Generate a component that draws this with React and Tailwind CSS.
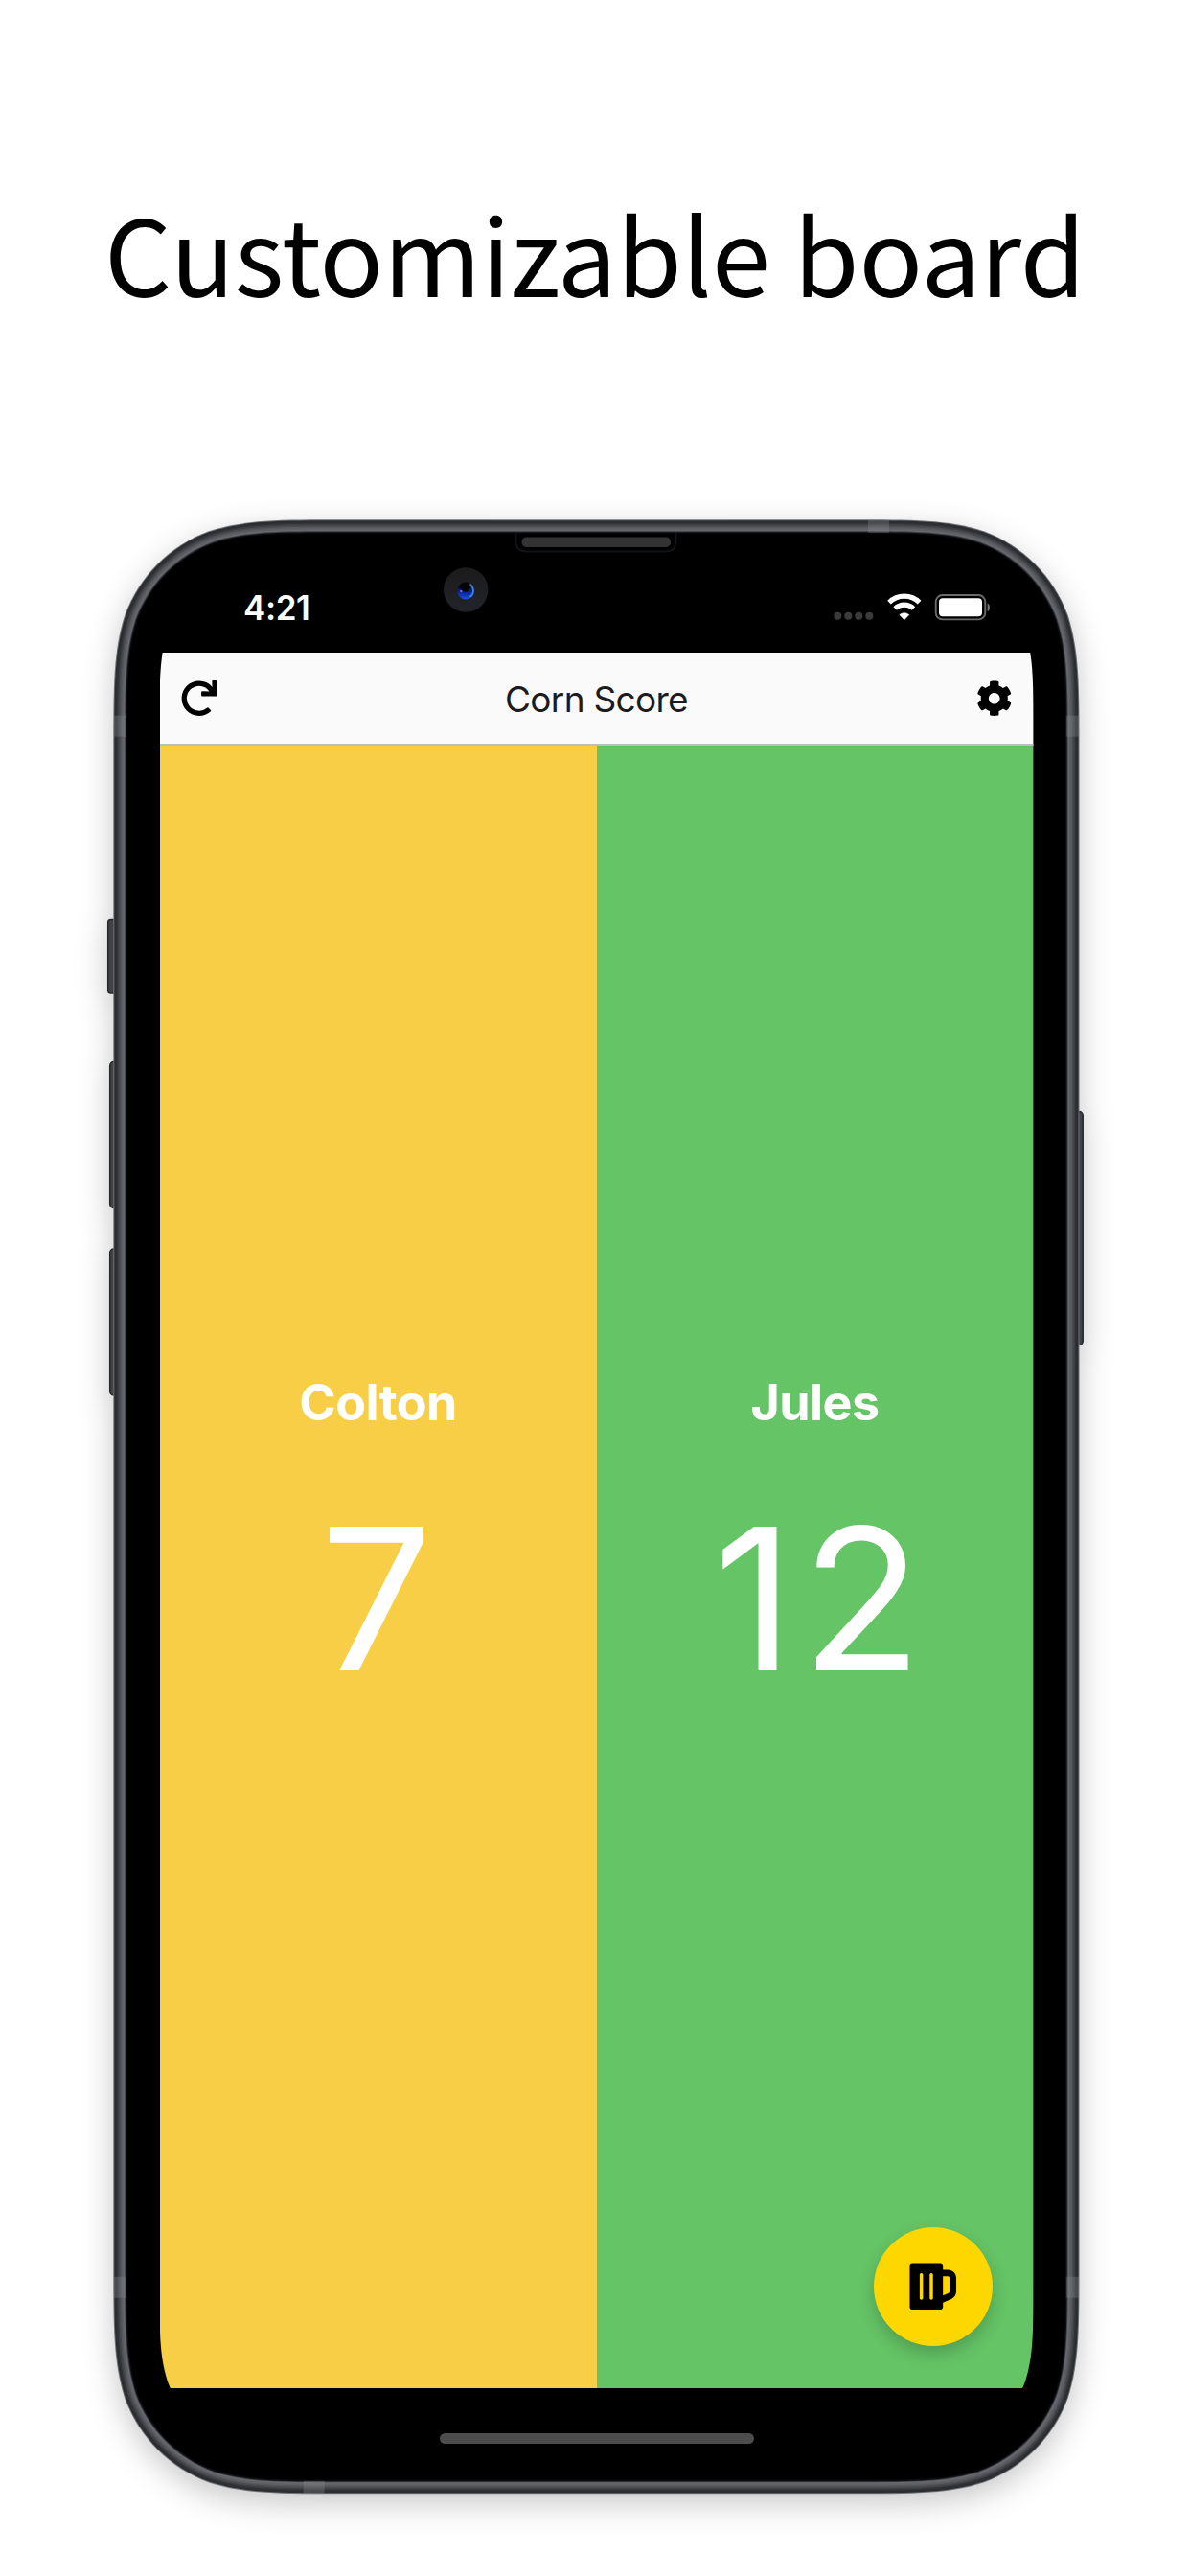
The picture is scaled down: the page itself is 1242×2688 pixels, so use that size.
import { FaRedo, FaCog, FaBeer } from "react-icons/fa";

// Rounded rectangle with continuous (smoothed) corners.
function smoothRect(x, y, w, h, r) {
  const a = 1.528665 * r;
  const b = 1.08849 * r;
  const c = 0.868407 * r;
  const d = 0.631494 * r;
  const e = 0.074911 * r;
  const f = 0.372824 * r;
  const g = 0.16906 * r;
  const R = x + w;
  const B = y + h;
  return [
    `M${x + a} ${y}`,
    `L${R - a} ${y}`,
    `C${R - b} ${y} ${R - c} ${y} ${R - d} ${y + e}`,
    `C${R - f} ${y + g} ${R - g} ${y + f} ${R - e} ${y + d}`,
    `C${R} ${y + c} ${R} ${y + b} ${R} ${y + a}`,
    `L${R} ${B - a}`,
    `C${R} ${B - b} ${R} ${B - c} ${R - e} ${B - d}`,
    `C${R - g} ${B - f} ${R - f} ${B - g} ${R - d} ${B - e}`,
    `C${R - c} ${B} ${R - b} ${B} ${R - a} ${B}`,
    `L${x + a} ${B}`,
    `C${x + b} ${B} ${x + c} ${B} ${x + d} ${B - e}`,
    `C${x + f} ${B - g} ${x + g} ${B - f} ${x + e} ${B - d}`,
    `C${x} ${B - c} ${x} ${B - b} ${x} ${B - a}`,
    `L${x} ${y + a}`,
    `C${x} ${y + b} ${x} ${y + c} ${x + e} ${y + d}`,
    `C${x + g} ${y + f} ${x + f} ${y + g} ${x + d} ${y + e}`,
    `C${x + c} ${y} ${x + b} ${y} ${x + a} ${y}Z`,
  ].join(" ");
}

// Metal rim, one ring per entry: [inset, colour].
const rim = [
  [0, "#6f7377"],
  [1, "#2b2d31"],
  [3, "#303236"],
  [4.5, "#3d3f43"],
  [6, "#4b4c51"],
  [7.5, "#57585d"],
  [9, "#606166"],
  [10.5, "#67686d"],
  [12, "#3a3c41"],
  [13, "#0b0d12"],
  [14.5, "#000000"],
];

function Chassis() {
  return (
    <svg className="absolute inset-0 overflow-visible" width="1009" height="2061" viewBox="0 0 1009 2061" aria-hidden="true">
      <g fill="#3f4246" stroke="#25272b" strokeWidth="1.5">
        <rect x="-5.3" y="417.5" width="14" height="76.5" rx="3" />
        <rect x="-3.3" y="565.5" width="14" height="153" rx="4" />
        <rect x="-3.3" y="761" width="14" height="153" rx="4" />
        <rect x="999" y="617.5" width="13.2" height="244" rx="4" />
      </g>
      {rim.map(([inset, color]) => (
        <path key={inset} d={smoothRect(0.3 + inset, 0.3 + inset, 1008.2 - inset * 2, 2060 - inset * 2, 158 - inset)} fill={color} />
      ))}
      <g fill="#8b8d92" fillOpacity="0.3">
        <rect x="0.5" y="204.7" width="13.5" height="22" />
        <rect x="994.8" y="204.7" width="13.5" height="22" />
        <rect x="0.5" y="1833.8" width="13.5" height="22" />
        <rect x="994.8" y="1833.8" width="13.5" height="22" />
        <rect x="788" y="0.5" width="22" height="13.5" />
        <rect x="198.7" y="2046.8" width="22" height="13.5" />
      </g>
      <path d="M420.3 14V22Q420.3 33.5 431.8 33.5H576Q587.5 33.5 587.5 22V14" fill="none" stroke="#10131a" strokeWidth="2" />
      <rect x="426.5" y="18.5" width="155.5" height="10.5" rx="5" fill="#333334" />
    </svg>
  );
}

function Camera() {
  return (
    <svg className="absolute left-[344px] top-[50px]" width="48" height="48" viewBox="0 0 48 48" aria-hidden="true">
      <defs>
        <linearGradient id="ring" x1="0" y1="0" x2="0" y2="1">
          <stop offset="0" stopColor="#1b1b1b" />
          <stop offset="1" stopColor="#23242b" />
        </linearGradient>
        <linearGradient id="lens" x1="0" y1="0" x2="0" y2="1">
          <stop offset="0.2" stopColor="#02040c" />
          <stop offset="0.65" stopColor="#0a2aa8" />
          <stop offset="1" stopColor="#1a55e0" />
        </linearGradient>
      </defs>
      <circle cx="24.2" cy="23.5" r="23.2" fill="url(#ring)" />
      <circle cx="24.2" cy="24.5" r="9" fill="url(#lens)" />
      <circle cx="23.6" cy="20.8" r="5" fill="#020207" />
      <path d="M29.2 18.2A8 8 0 0 1 29 30.5" fill="none" stroke="#3d86d0" strokeWidth="1.8" strokeLinecap="round" />
      <circle cx="19.3" cy="25" r="1.2" fill="#8a5be0" />
    </svg>
  );
}

function StatusIcons() {
  return (
    <svg width="164" height="32" viewBox="0 0 164 32" aria-hidden="true">
      <g fill="#3b3b3b">
        <circle cx="5.3" cy="25.7" r="4" />
        <circle cx="16.3" cy="25.7" r="4" />
        <circle cx="27.3" cy="25.7" r="4" />
        <circle cx="38.3" cy="25.7" r="4" />
      </g>
      <g fill="none" stroke="#fff" strokeWidth="5.2">
        <path d="M59 11.6A22.5 22.5 0 0 1 90.6 11.6" />
        <path d="M65.2 18A13.8 13.8 0 0 1 84.4 18" />
      </g>
      <path d="M74.8 29.8L69.8 24.6A7.4 7.4 0 0 1 79.8 24.6Z" fill="#fff" stroke="#fff" strokeWidth="0.6" strokeLinejoin="round" />
      <rect x="107.7" y="4" width="51.6" height="25.4" rx="7" fill="none" stroke="#6b6b6b" strokeWidth="1.9" />
      <rect x="111" y="7.2" width="45" height="19" rx="4" fill="#fff" />
      <path d="M161.6 12.2Q164 13.4 164 16.7T161.6 21.2Z" fill="#777" />
    </svg>
  );
}

function Team({ name, score, color, scoreClass, children }) {
  return (
    <section className={`relative flex flex-1 flex-col items-center pt-[655px] text-white ${color}`}>
      <h2 className="text-[52px] font-bold leading-[62px] tracking-[-0.6px]">{name}</h2>
      <p className={`mt-[48px] text-[206px] leading-[250px] ${scoreClass}`}>{score}</p>
      {children}
    </section>
  );
}

export default function App() {
  return (
    <main className="flex h-[2688px] w-[1242px] flex-col overflow-hidden bg-white font-['Inter',sans-serif]">
      <h1 className="flex h-[542px] justify-center whitespace-nowrap pt-[182px] font-['Noto_Sans_CJK_SC',sans-serif] text-[110px] leading-[160px] text-black">
        Customizable board
      </h1>
      <div className="relative ml-[118px] h-[2061px] w-[1009px] shrink-0">
        <div className="absolute inset-0 drop-shadow-[0_10px_16px_rgba(0,0,0,0.22)]">
          <Chassis />
        </div>
        <div className="relative flex h-full flex-col">
          <div className="flex h-[139px] items-start justify-between pl-[136px] pr-[94px] pt-[75px]">
            <time className="text-[35px] font-semibold leading-[34px] tracking-[-0.4px] text-white">4:21</time>
            <StatusIcons />
            <Camera />
          </div>
          <div
            className="mx-[48.5px] flex h-[1811px] flex-col"
            style={{ clipPath: `path("${smoothRect(0, -91, 911.9, 1964, 110)}")` }}
          >
            <header className="flex h-[97px] items-center justify-between border-b-2 border-[#bdbdbd] bg-[#fafafa] px-[22px] text-black">
              <FaRedo size={37.5} />
              <span className="pt-[2px] text-[37px] leading-[44px] tracking-[-0.7px] text-[#1c1c1e]">Corn Score</span>
              <FaCog size={37.5} />
            </header>
            <div className="flex flex-1">
              <Team name="Colton" score="7" color="bg-[#f8ce46]" scoreClass="mr-[4px]" />
              <Team name="Jules" score="12" color="bg-[#65c466]" scoreClass="ml-[14px] tracking-[8px]">
                <button className="absolute bottom-[44px] right-[43px] flex size-[124px] items-center justify-center rounded-full bg-[#ffd700] text-black shadow-[0_8px_18px_rgba(0,0,0,0.2)]">
                  <FaBeer size={55.5} />
                </button>
              </Team>
            </div>
          </div>
          <div className="mx-auto mt-[46.5px] h-[11.5px] w-[328px] rounded-full bg-[#4d4d4d]" />
        </div>
      </div>
    </main>
  );
}
